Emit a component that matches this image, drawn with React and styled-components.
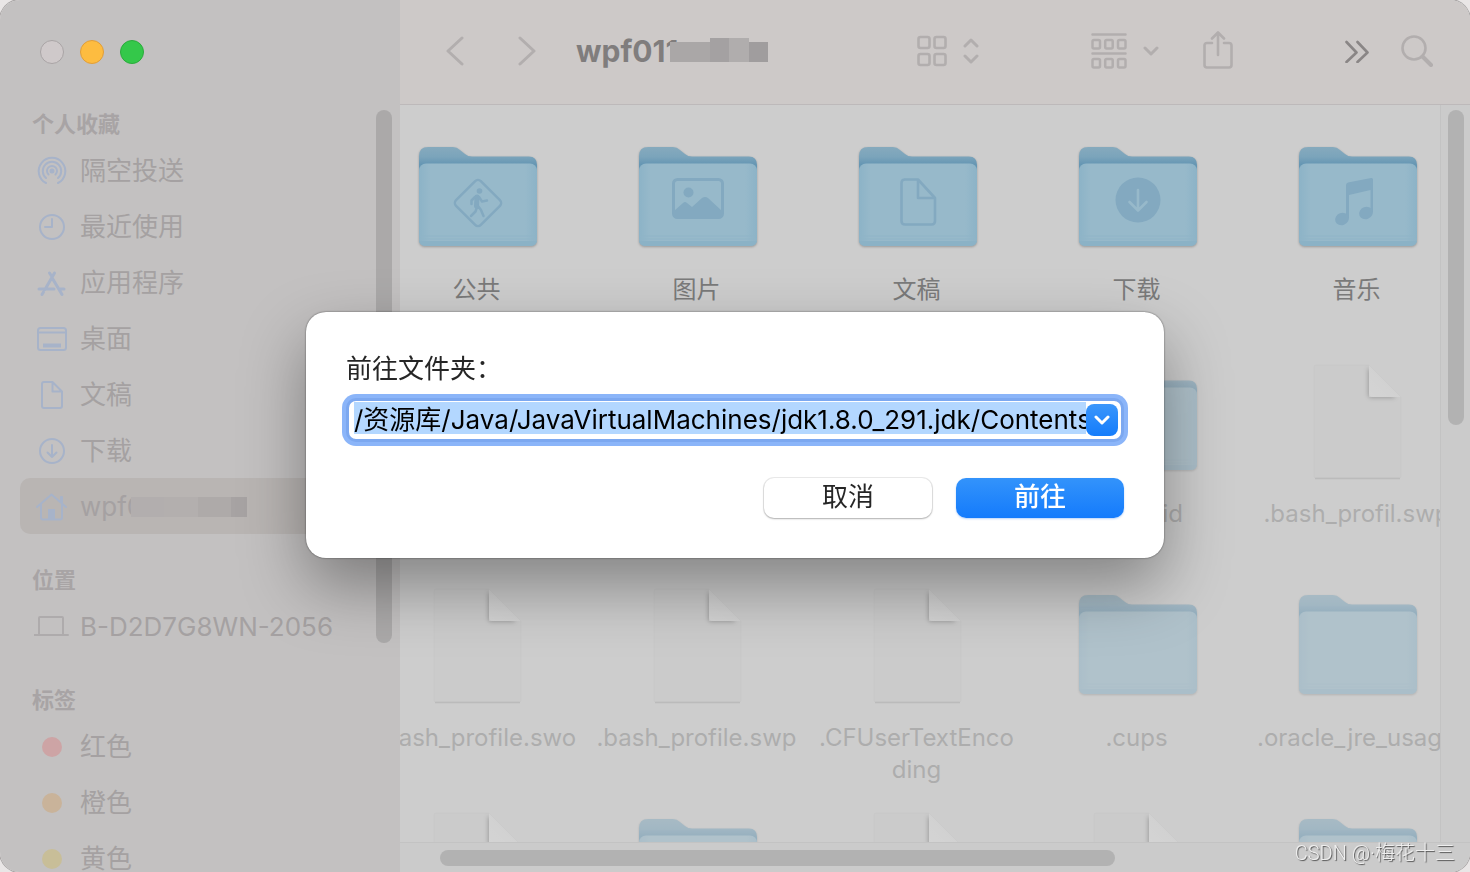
import React, { useState } from "react";
import styled, { createGlobalStyle } from "styled-components";

const favorites = [
  { id: "airdrop", name: "隔空投送" },
  { id: "recent", name: "最近使用" },
  { id: "apps", name: "应用程序" },
  { id: "desktop", name: "桌面" },
  { id: "documents", name: "文稿" },
  { id: "downloads", name: "下载" },
  { id: "home", name: "wpf0", masked: true },
];

const tags = [
  { name: "红色", color: "#cda4a5" },
  { name: "橙色", color: "#c9b39a" },
  { name: "黄色", color: "#c8be98" },
];

// null 은 대화상자 뒤에 가려진 칸
const files = [
  { type: "folder", glyph: "public", name: ["公共"] },
  { type: "folder", glyph: "picture", name: ["图片"] },
  { type: "folder", glyph: "document", name: ["文稿"] },
  { type: "folder", glyph: "download", name: ["下载"] },
  { type: "folder", glyph: "music", name: ["音乐"] },
  null,
  null,
  null,
  { type: "folder", hidden: true, name: [".android"] },
  { type: "file", hidden: true, name: [".bash_profil.swp"] },
  { type: "file", hidden: true, name: [".bash_profile.swo"] },
  { type: "file", hidden: true, name: [".bash_profile.swp"] },
  { type: "file", hidden: true, name: [".CFUserTextEnco", "ding"] },
  { type: "folder", hidden: true, name: [".cups"] },
  { type: "folder", hidden: true, name: [".oracle_jre_usage"] },
  { type: "file", hidden: true, name: [] },
  { type: "folder", hidden: true, name: [] },
  { type: "file", hidden: true, name: [] },
  { type: "file", hidden: true, name: [] },
  { type: "folder", hidden: true, name: [] },
];

const SideIcon = ({ id }) => (
  <IconSlot viewBox="0 0 36 36" aria-hidden="true">
    {id === "airdrop" && (
      <>
        <path d="M12 30A13.300 13.300 0 1 1 24 30" />
        <path d="M12 25A9.200 9.200 0 1 1 24 25" />
        <path d="M14.500 21.500A5 5 0 1 1 21.500 21.500" />
        <circle cx="18" cy="18" r="1.500" fill="currentColor" />
      </>
    )}
    {id === "recent" && (
      <>
        <circle cx="18" cy="18" r="12" />
        <path d="M18 10V18H11" />
      </>
    )}
    {id === "apps" && (
      <g strokeWidth="3">
        <path d="M15.500 8L17.500 11M20.500 8L11 24.500M18.500 13.500L28 29.500M5 24H20M25.500 24H30M9.500 27L8 29.500" />
      </g>
    )}
    {id === "desktop" && (
      <>
        <rect x="4" y="7" width="28" height="22" rx="2.500" />
        <path d="M4 11.500H32" />
        <path d="M9 24.500H27" strokeWidth="4" strokeLinecap="butt" />
      </>
    )}
    {id === "documents" && (
      <path d="M10 5H18.500L28 14.500V29Q28 31 26 31H10Q8 31 8 29V7Q8 5 10 5ZM18.500 5V14.500H28" />
    )}
    {id === "downloads" && (
      <>
        <circle cx="18" cy="18" r="12" />
        <path d="M18 12V24M13.500 19.500L18 24L22.500 19.500" />
      </>
    )}
    {id === "home" && (
      <>
        <path d="M3 18L17.500 5.500L32 18M7 15V28.500Q7 30.500 9 30.500H26Q28 30.500 28 28.500V15M27 13V8H28V14" />
        <path d="M14 20H21V31H14Z" fill="currentColor" stroke="none" />
      </>
    )}
    {id === "laptop" && (
      <>
        <path d="M5 25V9Q5 8 6 8H28Q29 8 29 9V25" />
        <path d="M0 26H34" />
      </>
    )}
  </IconSlot>
);

const FolderGlyph = ({ glyph }) => {
  const c = "#83a9c0";
  if (glyph === "public") {
    return (
      <g fill="none" stroke={c} strokeWidth="2.500" strokeLinecap="round" strokeLinejoin="round">
        <rect x="42.500" y="39.500" width="35" height="35" rx="4" transform="rotate(45 60 57)" />
        <circle cx="61.500" cy="45" r="2.800" fill={c} stroke="none" />
        <path d="M59 51L58.500 60" strokeWidth="5" />
        <path d="M57 51L53.500 54.500V58M61 51L64 55.500L69 54.500M59 61L57.500 65.500L53 70M60 60L63 64L65.500 70" />
      </g>
    );
  }
  if (glyph === "picture") {
    return (
      <g fill={c}>
        <rect x="35.500" y="33.500" width="49" height="38" rx="4" fill="none" stroke={c} strokeWidth="3" />
        <circle cx="50.500" cy="46.500" r="5" />
        <path d="M36 65L45 57Q47 55 49 57L54 61L64 52Q67 50 70 52L84 65V71H36Z" />
      </g>
    );
  }
  if (glyph === "document") {
    return (
      <path
        d="M46 33.500H60L77 52V75Q77 78.500 73.500 78.500H47Q43.500 78.500 43.500 75V37Q43.500 33.500 47 33.500M60 33.500V52H77"
        fill="none"
        stroke={c}
        strokeWidth="2.600"
        strokeLinejoin="round"
      />
    );
  }
  if (glyph === "download") {
    return (
      <g>
        <circle cx="60" cy="54" r="22.500" fill={c} />
        <path d="M60 44V64M51.500 56L60 64.500L68.500 56" fill="none" stroke="#97b9ca" strokeWidth="2.600" strokeLinecap="round" strokeLinejoin="round" />
      </g>
    );
  }
  if (glyph === "music") {
    return (
      <g fill={c}>
        <path d="M48 39Q48 37 50 36.500L73 32Q75 31.500 75 33.500V66H72.500V44L51 49V72H48Z" />
        <ellipse cx="44" cy="73" rx="7" ry="6" transform="rotate(-20 44 73)" />
        <ellipse cx="68" cy="67" rx="7" ry="6" transform="rotate(-20 68 67)" />
      </g>
    );
  }
  return null;
};

const Folder = ({ glyph, hidden }) => (
  <FolderSvg viewBox="0 0 120 104" $hidden={hidden} aria-hidden="true">
    <defs>
      <linearGradient id="folderBack" x1="0" y1="0" x2="0" y2="1">
        <stop offset="0" stopColor="#86aabd" />
        <stop offset="0.250" stopColor="#7ba4bb" />
        <stop offset="0.450" stopColor="#6596b3" />
      </linearGradient>
      <linearGradient id="folderFront" x1="0" y1="0" x2="1" y2="0">
        <stop offset="0" stopColor="#8cb3c7" />
        <stop offset="0.100" stopColor="#97b9ca" />
        <stop offset="0.900" stopColor="#97b9ca" />
        <stop offset="1" stopColor="#8cb3c7" />
      </linearGradient>
    </defs>
    <path d="M1 10Q1 1 10 1H35Q39 1 42 4L47 8Q50 10.500 54 10.500H111Q119 10.500 119 19V40H1Z" fill="url(#folderBack)" />
    <rect x="1" y="17.500" width="118" height="82.500" rx="7" fill="url(#folderFront)" />
    <path d="M2 90H118M2 93H118" stroke="#8fb4c7" strokeWidth="1" />
    <path d="M1 95H119Q118.500 100 112 100H8Q1.500 100 1 95Z" fill="#8bb2c6" />
    <FolderGlyph glyph={glyph} />
  </FolderSvg>
);

const FilePage = () => (
  <PageSvg viewBox="0 0 92 118" aria-hidden="true">
    <defs>
      <linearGradient id="pageFold" x1="0" y1="1" x2="1" y2="0">
        <stop offset="0" stopColor="#fff" stopOpacity="0.180" />
        <stop offset="1" stopColor="#fff" stopOpacity="0.060" />
      </linearGradient>
      <filter id="pageBlur" x="-40%" y="-40%" width="180%" height="180%">
        <feGaussianBlur stdDeviation="2" />
      </filter>
      <clipPath id="pageClip">
        <path d="M2 2H57V34H88V116H2Z" />
      </clipPath>
    </defs>
    <path d="M2 4Q2 2 4 2H57L89 34V114Q89 115 87 115H4Q2 115 2 114Z" fill="rgba(0,0,0,0.008)" stroke="rgba(0,0,0,0.020)" />
    <path d="M3 115.500H88" stroke="rgba(0,0,0,0.080)" strokeWidth="1.500" />
    <g clipPath="url(#pageClip)">
      <path d="M56 4V31Q56 35 60 35H84Z" fill="rgba(0,0,0,0.220)" filter="url(#pageBlur)" />
    </g>
    <path d="M57 2V30Q57 34 61 34H89Z" fill="url(#pageFold)" />
  </PageSvg>
);

const App = () => {
  const [path, setPath] = useState("/资源库/Java/JavaVirtualMachines/jdk1.8.0_291.jdk/Contents/");

  return (
    <>
      <GlobalStyle />
      <Window>
        <Sidebar>
          <Lights>
            <Light $color="#cfc9ca" $line="#a9a4a5" aria-label="关闭" />
            <Light $color="#fdbc40" $line="#e09e3a" aria-label="最小化" />
            <Light $color="#34c84a" $line="#2bab3c" aria-label="缩放" />
          </Lights>
          <SidebarBody>
            <SideList>
              <Section>
                <SectionTitle>个人收藏</SectionTitle>
                {favorites.map((item) => (
                  <SideItem key={item.id} href="#" $active={item.masked}>
                    <SideIcon id={item.id} />
                    {item.name}
                    {item.masked && (
                      <SideMask>
                        <i />
                        <i />
                        <i />
                        <i />
                      </SideMask>
                    )}
                  </SideItem>
                ))}
              </Section>
              <Section>
                <SectionTitle>位置</SectionTitle>
                <SideItem href="#" $gray>
                  <SideIcon id="laptop" />
                  B-D2D7G8WN-2056
                </SideItem>
              </Section>
              <Section>
                <SectionTitle>标签</SectionTitle>
                {tags.map((tag) => (
                  <SideItem key={tag.name} href="#">
                    <TagSlot>
                      <TagDot $color={tag.color} />
                    </TagSlot>
                    {tag.name}
                  </SideItem>
                ))}
              </Section>
            </SideList>
            <SideTrack>
              <Thumb $height="70%" />
            </SideTrack>
          </SidebarBody>
        </Sidebar>

        <Main>
          <Toolbar>
            <Nav>
              <ToolButton aria-label="返回">
                <svg width="18" height="30" viewBox="0 0 18 30" strokeWidth="3">
                  <path d="M16 2L2 15L16 28" />
                </svg>
              </ToolButton>
              <ToolButton aria-label="前进">
                <svg width="18" height="30" viewBox="0 0 18 30" strokeWidth="3">
                  <path d="M2 2L16 15L2 28" />
                </svg>
              </ToolButton>
            </Nav>
            <Title>
              wpf011
              <TitleMask>
                <i />
                <i />
                <i />
                <i />
                <i />
              </TitleMask>
            </Title>
            <Tools>
              <ToolGroup $gap={16}>
                <ToolButton aria-label="图标视图">
                  <svg width="30" height="32" viewBox="0 0 30 32">
                    <rect x="1.500" y="2" width="11" height="11" rx="2" />
                    <rect x="17.500" y="2" width="11" height="11" rx="2" />
                    <rect x="1.500" y="19" width="11" height="11" rx="2" />
                    <rect x="17.500" y="19" width="11" height="11" rx="2" />
                  </svg>
                </ToolButton>
                <ToolButton aria-label="切换视图">
                  <svg width="16" height="28" viewBox="0 0 16 28" strokeWidth="3">
                    <path d="M2 9L8 3L14 9M2 19L8 25L14 19" />
                  </svg>
                </ToolButton>
              </ToolGroup>
              <ToolGroup $gap={44}>
                <ToolButton aria-label="分组">
                  <svg width="36" height="36" viewBox="0 0 36 36" strokeWidth="2.500">
                    <path d="M1.500 1.500H34.500M1.500 20.500H34.500" />
                    <rect x="1.500" y="7" width="7.500" height="8.500" rx="1.500" />
                    <rect x="14.200" y="7" width="7.500" height="8.500" rx="1.500" />
                    <rect x="27" y="7" width="7.500" height="8.500" rx="1.500" />
                    <rect x="1.500" y="26" width="7.500" height="8.500" rx="1.500" />
                    <rect x="14.200" y="26" width="7.500" height="8.500" rx="1.500" />
                    <rect x="27" y="26" width="7.500" height="8.500" rx="1.500" />
                  </svg>
                  <svg width="16" height="12" viewBox="0 0 16 12" strokeWidth="3">
                    <path d="M2 3L8 9L14 3" />
                  </svg>
                </ToolButton>
                <ToolButton aria-label="共享">
                  <svg width="30" height="40" viewBox="0 0 30 40">
                    <path d="M9 12H4Q1.500 12 1.500 14.500V34Q1.500 36.500 4 36.500H26Q28.500 36.500 28.500 34V14.500Q28.500 12 26 12H21M15 24V2M9 7.500L15 1.500L21 7.500" />
                  </svg>
                </ToolButton>
              </ToolGroup>
              <ToolGroup $gap={32}>
                <ToolButton aria-label="更多" $dark>
                  <svg width="24" height="24" viewBox="0 0 24 24">
                    <path d="M1.500 3L11.500 13.500L1.500 23M12.500 3L22.500 13.500L12.500 23" />
                  </svg>
                </ToolButton>
                <ToolButton aria-label="搜索">
                  <svg width="32" height="32" viewBox="0 0 32 32">
                    <circle cx="13" cy="13" r="11.500" />
                    <path d="M21.500 21.500L30 30" strokeWidth="4" />
                  </svg>
                </ToolButton>
              </ToolGroup>
            </Tools>
          </Toolbar>

          <Body>
            <Files>
              <FileGrid>
                {files.map((file, i) => (
                  <Cell key={i}>
                    {file && (
                      <>
                        <IconBox>
                          {file.type === "folder" ? (
                            <Folder glyph={file.glyph} hidden={file.hidden} />
                          ) : (
                            <FilePage />
                          )}
                        </IconBox>
                        <FileName $hidden={file.hidden}>
                          {file.name.map((line) => (
                            <span key={line}>{line}</span>
                          ))}
                        </FileName>
                      </>
                    )}
                  </Cell>
                ))}
              </FileGrid>
            </Files>
            <VerticalTrack>
              <Thumb $height="43%" />
            </VerticalTrack>
          </Body>
          <HorizontalTrack>
            <WideThumb />
          </HorizontalTrack>
        </Main>
      </Window>

      <Overlay>
        <Dialog role="dialog" aria-labelledby="goto-label" onSubmit={(e) => e.preventDefault()}>
          <Label id="goto-label" htmlFor="goto-path">
            前往文件夹：
          </Label>
          <Combo>
            <PathInput id="goto-path" type="text" value={path} spellCheck="false" onChange={(e) => setPath(e.target.value)} />
            <DropButton type="button" aria-label="历史记录">
              <svg width="16" height="12" viewBox="0 0 16 12">
                <path d="M2 3L8 9L14 3" fill="none" stroke="#fff" strokeWidth="3" strokeLinecap="round" strokeLinejoin="round" />
              </svg>
            </DropButton>
          </Combo>
          <Actions>
            <DialogButton type="button">取消</DialogButton>
            <DialogButton type="submit" $primary>
              前往
            </DialogButton>
          </Actions>
        </Dialog>
      </Overlay>
      <Watermark>CSDN @·梅花十三</Watermark>
    </>
  );
};
export default App;

const GlobalStyle = createGlobalStyle`
  * {
    box-sizing: border-box;
  }
  body {
    margin: 0;
    background: #e9e6e6;
    font-family: Inter, "Noto Sans CJK SC", sans-serif;
    overflow: hidden;
  }
  button {
    padding: 0;
    border: 0;
    background: none;
    font-family: inherit;
  }
`;
const Window = styled.div`
  display: flex;
  height: 100vh;
  border-radius: 20px;
  overflow: hidden;
  box-shadow: 0 0 0 1px #a8a5a5;
`;
const Sidebar = styled.aside`
  width: 400px;
  flex: none;
  display: flex;
  flex-direction: column;
  background: #c3c1c1;
`;
const Lights = styled.div`
  flex: none;
  height: 104px;
  padding-left: 40px;
  display: flex;
  align-items: center;
  gap: 16px;
`;
const Light = styled.button`
  width: 24px;
  height: 24px;
  border-radius: 50%;
  && {
    background: ${(props) => props.$color};
    border: 1px solid ${(props) => props.$line};
  }
`;
const SidebarBody = styled.div`
  flex: 1;
  min-height: 0;
  display: flex;
`;
const SideList = styled.nav`
  flex: 1;
  padding: 2px 0 0 20px;
  display: flex;
  flex-direction: column;
  gap: 28px;
  overflow: hidden;
`;
const Section = styled.div`
  flex: none;
`;
const SectionTitle = styled.h2`
  margin: 0;
  padding-left: 12px;
  font-size: 22px;
  font-weight: 700;
  line-height: 36px;
  color: #a8a4a5;
`;
const SideItem = styled.a`
  height: 56px;
  padding: 2px 0 0 14px;
  display: flex;
  align-items: center;
  gap: 10px;
  border-radius: 10px;
  font-size: 26px;
  font-weight: 400;
  line-height: 36px;
  text-decoration: none;
  color: #a5a1a2;
  background: ${(props) => (props.$active ? "#b9b5b3" : "transparent")};
  svg {
    color: ${(props) => (props.$gray ? "#aeabac" : "#a7b3c9")};
  }
`;
const IconSlot = styled.svg`
  flex: none;
  width: 36px;
  height: 36px;
  fill: none;
  stroke: currentColor;
  stroke-width: 2;
  stroke-linecap: round;
  stroke-linejoin: round;
`;
const TagSlot = styled.span`
  width: 36px;
  display: flex;
  justify-content: center;
`;
const TagDot = styled.span`
  width: 20px;
  height: 20px;
  border-radius: 50%;
  background: ${(props) => props.$color};
`;
const SideMask = styled.span`
  display: flex;
  width: 116px;
  height: 20px;
  margin-left: -22px;
  i {
    flex: 2;
    background: #b2aeae;
  }
  i:nth-child(2) {
    background: #b3afae;
  }
  i:nth-child(3) {
    background: #aeaaa9;
  }
  i:nth-child(4) {
    flex: 1;
    background: #a7a3a3;
  }
`;
const SideTrack = styled.div`
  width: 24px;
  padding-top: 6px;
  flex: none;
`;
const Thumb = styled.div`
  width: 16px;
  height: ${(props) => props.$height};
  border-radius: 8px;
  background: rgba(0, 0, 0, 0.12);
`;
const Main = styled.main`
  flex: 1;
  min-width: 0;
  display: flex;
  flex-direction: column;
  background: #cdcdcd;
`;
const Toolbar = styled.header`
  flex: none;
  height: 105px;
  padding: 0 37px 2px 46px;
  display: flex;
  align-items: center;
  background: #cdc9c8;
  border-bottom: 1px solid #bdb9ba;
`;
const Nav = styled.div`
  display: flex;
  gap: 54px;
`;
const ToolButton = styled.button`
  display: flex;
  align-items: center;
  gap: 16px;
  color: ${(props) => (props.$dark ? "#8a8686" : "#b2aeae")};
  svg {
    fill: none;
    stroke: currentColor;
    stroke-linecap: round;
    stroke-linejoin: round;
  }
  svg:not([stroke-width]) {
    stroke-width: 2.6px;
  }
`;
const Title = styled.h1`
  flex: 1;
  margin: 0 0 0 40px;
  display: flex;
  align-items: center;
  font-size: 30px;
  font-weight: 700;
  line-height: 36px;
  color: #807d7d;
`;
const TitleMask = styled.span`
  display: flex;
  align-items: flex-end;
  width: 98px;
  height: 24px;
  margin: 0 0 2px -8px;
  i {
    flex: 1;
    height: 20px;
    background: #aaa7a7;
  }
  i:nth-child(3) {
    height: 24px;
    background: #a4a1a2;
  }
  i:nth-child(4) {
    height: 24px;
    background: #b0adad;
  }
  i:nth-child(5) {
    background: #a09d9e;
  }
`;
const Tools = styled.div`
  flex: none;
  display: flex;
  gap: 112px;
`;
const ToolGroup = styled.div`
  display: flex;
  align-items: center;
  gap: ${(props) => props.$gap}px;
`;
const Body = styled.div`
  flex: 1;
  min-height: 0;
  display: flex;
`;
const Files = styled.section`
  flex: 1;
  min-width: 0;
  overflow: hidden;
`;
// 가로로 조금 스크롤된 상태라 첫 열이 왼쪽으로 잘림
const FileGrid = styled.div`
  display: grid;
  grid-template-columns: repeat(5, 220px);
  grid-auto-rows: 224px;
  margin-left: -32px;
  padding-top: 29px;
`;
const Cell = styled.div`
  display: flex;
  flex-direction: column;
  align-items: center;
  gap: 12px;
`;
const IconBox = styled.div`
  flex: none;
  height: 128px;
  display: flex;
  align-items: center;
`;
const FolderSvg = styled.svg`
  width: 120px;
  height: 104px;
  opacity: ${(props) => (props.$hidden ? 0.52 : 1)};
  filter: drop-shadow(0 1px 1px rgba(0, 0, 0, 0.25));
`;
const PageSvg = styled.svg`
  width: 92px;
  height: 118px;
`;
const FileName = styled.div`
  display: flex;
  flex-direction: column;
  align-items: center;
  padding-right: 3px;
  font-size: 24px;
  line-height: 32px;
  white-space: nowrap;
  color: ${(props) => (props.$hidden ? "#adadad" : "#7a7a7a")};
`;
const VerticalTrack = styled.div`
  flex: none;
  width: 30px;
  padding: 5px 0 0 7px;
  border-left: 1px solid #c3c3c3;
  background: #cbcbcb;
`;
const HorizontalTrack = styled.div`
  flex: none;
  height: 30px;
  padding: 7px 38px 0 40px;
  border-top: 1px solid #c3c3c3;
  background: #cbcbcb;
`;
const WideThumb = styled.div`
  width: 68%;
  height: 16px;
  border-radius: 8px;
  background: rgba(0, 0, 0, 0.12);
`;
const Overlay = styled.div`
  position: fixed;
  inset: 0;
  padding-bottom: 2px;
  display: flex;
  align-items: center;
  justify-content: center;
`;
const Dialog = styled.form`
  width: 858px;
  max-width: 100%;
  padding: 40px;
  display: flex;
  flex-direction: column;
  border-radius: 20px;
  background: #fff;
  box-shadow: 0 0 2px rgba(0, 0, 0, 0.6), 0 28px 64px rgba(0, 0, 0, 0.36);
`;
const Label = styled.label`
  font-size: 26px;
  line-height: 34px;
  color: #262626;
`;
const Combo = styled.div`
  height: 44px;
  margin-top: 12px;
  padding: 0 3px 0 5px;
  display: flex;
  align-items: center;
  border: 3px solid #7ca8f0;
  border-radius: 10px;
  background: #fff;
  box-shadow: 0 0 0 4px #8bb5f9;
`;
const PathInput = styled.input`
  flex: 1;
  min-width: 0;
  height: 32px;
  margin-bottom: 4px;
  padding: 0 0 2px;
  border: 0;
  outline: 0;
  background: #b3d7ff;
  color: #000;
  font-family: inherit;
  font-size: 26px;
`;
const DropButton = styled.button`
  flex: none;
  width: 32px;
  height: 32px;
  display: flex;
  align-items: center;
  justify-content: center;
  border-radius: 8px;
  && {
    background: linear-gradient(#3a96fb, #147cfb);
  }
`;
const Actions = styled.div`
  margin-top: 36px;
  display: flex;
  justify-content: flex-end;
  gap: 24px;
`;
const DialogButton = styled.button`
  width: 168px;
  height: 40px;
  border-radius: 10px;
  font-size: 26px;
  line-height: 36px;
  font-weight: ${(props) => (props.$primary ? 500 : 400)};
  color: ${(props) => (props.$primary ? "#fff" : "#262626")};
  && {
    padding-bottom: 2px;
    background: ${(props) => (props.$primary ? "linear-gradient(#3393fb, #147bfc)" : "#fff")};
  }
  box-shadow: ${(props) =>
    props.$primary ? "0 1px 2px rgba(20, 110, 240, 0.3)" : "0 0 0 1px rgba(0, 0, 0, 0.08), 0 1px 2px rgba(0, 0, 0, 0.25)"};
`;
const Watermark = styled.div`
  position: fixed;
  right: 15px;
  bottom: 6px;
  font-family: Roboto, "Noto Sans CJK SC", sans-serif;
  font-size: 20px;
  font-weight: 300;
  line-height: 26px;
  color: #efefef;
  text-shadow: 1px 1px 1px rgba(0, 0, 0, 0.6);
`;
